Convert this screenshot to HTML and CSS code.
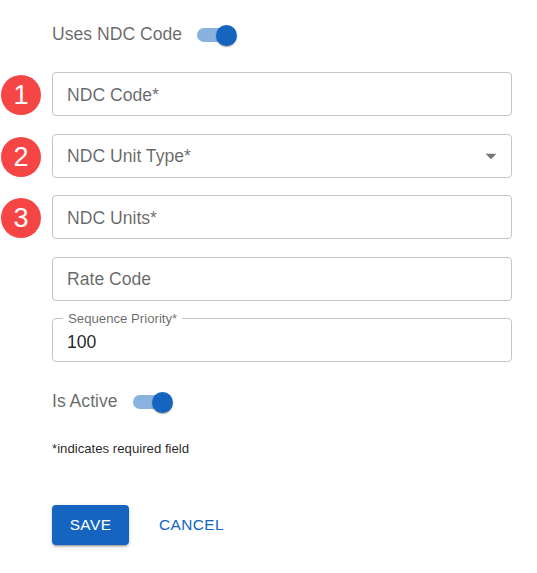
FILE: index.html
```html
<!DOCTYPE html>
<html lang="en">
<head>
<meta charset="utf-8">
<title>NDC Form</title>
<link rel="stylesheet" href="styles.css">
</head>
<body>
<form class="form">
  <div class="row toggle-row first">
    <span class="lead"></span>
    <label class="toggle">
      <span class="toggle-label">Uses NDC Code</span>
      <span class="switch"><span class="track"></span><span class="thumb"></span></span>
    </label>
  </div>

  <div class="fields">
    <div class="row">
      <span class="lead"><span class="badge">1</span></span>
      <div class="field"><span class="placeholder">NDC Code*</span></div>
    </div>
    <div class="row">
      <span class="lead"><span class="badge">2</span></span>
      <div class="field select">
        <span class="placeholder">NDC Unit Type*</span>
        <svg class="arrow" viewBox="0 0 24 24" width="26" height="26"><path d="M7 10l5 5 5-5z" fill="currentColor"/></svg>
      </div>
    </div>
    <div class="row">
      <span class="lead"><span class="badge">3</span></span>
      <div class="field"><span class="placeholder">NDC Units*</span></div>
    </div>
    <div class="row">
      <span class="lead"></span>
      <div class="field"><span class="placeholder">Rate Code</span></div>
    </div>
    <div class="row">
      <span class="lead"></span>
      <div class="field filled">
        <span class="float-label">Sequence Priority*</span>
        <span class="value">100</span>
      </div>
    </div>
  </div>

  <div class="row toggle-row active-row">
    <span class="lead"></span>
    <label class="toggle">
      <span class="toggle-label">Is Active</span>
      <span class="switch"><span class="track"></span><span class="thumb"></span></span>
    </label>
  </div>

  <div class="row note-row">
    <span class="lead"></span>
    <p class="note">*indicates required field</p>
  </div>

  <div class="row actions">
    <span class="lead"></span>
    <div class="buttons">
      <button type="button" class="btn btn-save">SAVE</button>
      <button type="button" class="btn btn-cancel">CANCEL</button>
    </div>
  </div>
</form>
</body>
</html>
```

FILE: styles.css
```css
* { box-sizing: border-box; }

html, body {
  margin: 0;
  padding: 0;
  background: #ffffff;
}

body {
  font-family: "Liberation Sans", Arial, Helvetica, sans-serif;
  width: 537px;
  height: 573px;
  overflow: hidden;
}

.form {
  display: flex;
  flex-direction: column;
  padding-right: 25px;
}

.row {
  display: flex;
  align-items: center;
}

.lead {
  flex: 0 0 52px;
  display: flex;
  align-items: center;
}

.first {
  margin-top: 16px;
  height: 38px;
}

.toggle {
  display: flex;
  align-items: center;
  gap: 15px;
}

.toggle-label {
  font-size: 17.6px;
  color: rgba(0, 0, 0, 0.6);
  line-height: 1;
}

.switch {
  display: inline-flex;
  align-items: center;
  height: 38px;
  width: 40px;
}

.track {
  width: 34px;
  height: 14px;
  border-radius: 7px;
  background: #8ab2df;
  flex: 0 0 34px;
}

.thumb {
  width: 21px;
  height: 21px;
  flex: 0 0 21px;
  border-radius: 50%;
  background: #1565c0;
  margin-left: -15px;
  box-shadow: 0 2px 1px -1px rgba(0,0,0,0.2), 0 1px 1px 0 rgba(0,0,0,0.14), 0 1px 3px 0 rgba(0,0,0,0.12);
}

.fields {
  display: flex;
  flex-direction: column;
  gap: 17.5px;
  margin-top: 18px;
}

.badge {
  width: 40px;
  height: 40px;
  margin-left: 1px;
  margin-top: 2px;
  border-radius: 50%;
  background: #f64545;
  color: #ffffff;
  font-size: 27px;
  line-height: 40px;
  text-align: center;
}

.field {
  position: relative;
  flex: 1 1 auto;
  height: 44px;
  border: 1px solid #c4c4c4;
  border-radius: 4px;
  display: flex;
  align-items: center;
  padding: 0 14px;
}

.placeholder {
  font-size: 17.6px;
  color: rgba(0, 0, 0, 0.6);
  padding-top: 2px;
}

.select {
  justify-content: space-between;
  padding-right: 7px;
}

.arrow {
  color: rgba(0, 0, 0, 0.54);
}

.float-label {
  position: absolute;
  left: 10px;
  top: -8px;
  padding: 0 5px;
  background: #ffffff;
  font-size: 13.2px;
  line-height: 15px;
  color: rgba(0, 0, 0, 0.6);
}

.value {
  font-size: 17.6px;
  color: rgba(0, 0, 0, 0.87);
  margin-top: 4px;
}

.active-row {
  margin-top: 21px;
  height: 38px;
}

.note-row {
  margin-top: 19px;
}

.note {
  margin: 0;
  font-size: 13.2px;
  line-height: 18px;
  color: rgba(0, 0, 0, 0.87);
}

.actions {
  margin-top: 47px;
}

.buttons {
  display: flex;
  align-items: center;
}

.btn {
  font-family: "Liberation Sans", Arial, Helvetica, sans-serif;
  font-size: 15.4px;
  letter-spacing: 0.44px;
  border: none;
  cursor: pointer;
  height: 40px;
  border-radius: 4px;
}

.btn-save {
  background: #1565c0;
  color: #ffffff;
  width: 77px;
  padding: 0;
  box-shadow: 0 3px 1px -2px rgba(0,0,0,0.2), 0 2px 2px 0 rgba(0,0,0,0.14), 0 1px 5px 0 rgba(0,0,0,0.12);
}

.btn-cancel {
  background: transparent;
  color: #1565c0;
  margin-left: 21px;
  padding: 0 9px;
}
```
